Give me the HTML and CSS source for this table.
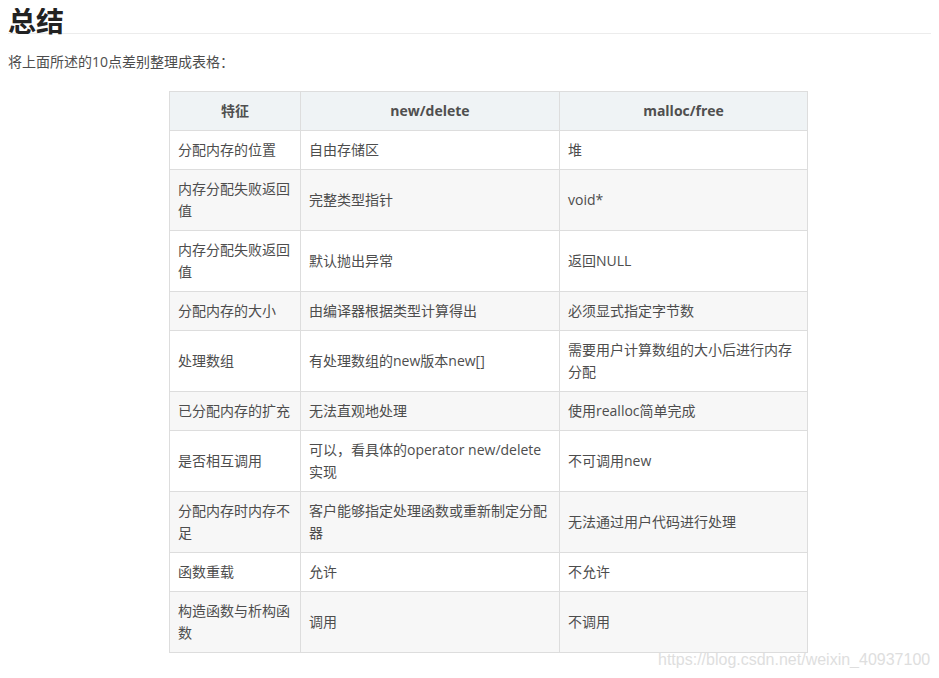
FILE: index.html
```html
<!DOCTYPE html>
<html lang="zh-CN">
<head>
<meta charset="utf-8">
<title>总结</title>
<link rel="stylesheet" href="styles.css">
</head>
<body>
<h2 class="title">总结</h2>
<p class="intro">将上面所述的10点差别整理成表格：</p>
<table class="cmp">
  <thead>
    <tr><th class="c1">特征</th><th class="c2">new/delete</th><th class="c3">malloc/free</th></tr>
  </thead>
  <tbody>
    <tr><td>分配内存的位置</td><td>自由存储区</td><td>堆</td></tr>
    <tr><td>内存分配失败返回值</td><td>完整类型指针</td><td>void*</td></tr>
    <tr><td>内存分配失败返回值</td><td>默认抛出异常</td><td>返回NULL</td></tr>
    <tr><td>分配内存的大小</td><td>由编译器根据类型计算得出</td><td>必须显式指定字节数</td></tr>
    <tr><td>处理数组</td><td>有处理数组的new版本new[]</td><td>需要用户计算数组的大小后进行内存分配</td></tr>
    <tr><td>已分配内存的扩充</td><td>无法直观地处理</td><td>使用realloc简单完成</td></tr>
    <tr><td>是否相互调用</td><td>可以，看具体的operator new/delete实现</td><td>不可调用new</td></tr>
    <tr><td>分配内存时内存不足</td><td>客户能够指定处理函数或重新制定分配器</td><td>无法通过用户代码进行处理</td></tr>
    <tr><td>函数重载</td><td>允许</td><td>不允许</td></tr>
    <tr><td>构造函数与析构函数</td><td>调用</td><td>不调用</td></tr>
  </tbody>
</table>
<div class="watermark">https://blog.csdn.net/weixin_40937100</div>
</body>
</html>
```
FILE: styles.css
```css
html, body {
  margin: 0;
  padding: 0;
  background: #fff;
}
body {
  margin: 8px;
  font-family: "Open Sans", "Noto Sans CJK SC", sans-serif;
  color: #4d4d4d;
  font-size: 14px;
  position: relative;
  min-height: 660px;
}
.title {
  margin: 0 -8px 0 0;
  font-size: 28px;
  line-height: 25px;
  font-weight: 700;
  color: #222;
  border-bottom: 1px solid #ececec;
  font-family: "Noto Sans CJK SC", sans-serif;
}
.intro {
  margin: 17px 0 0 0;
  line-height: 22px;
  font-size: 14px;
  color: #4d4d4d;
}
.cmp {
  margin: 18px 0 0 161px;
  border-collapse: collapse;
  font-size: 14px;
  line-height: 22px;
}
.cmp th, .cmp td {
  border: 1px solid #ddd;
  padding: 8px 8px;
  vertical-align: middle;
  text-align: left;
  color: #4d4d4d;
}
.cmp th {
  background: #eff3f5;
  text-align: center;
  font-weight: 700;
  color: #4f4f4f;
}
.cmp .c1 { width: 114px; }
.cmp .c2 { width: 242px; }
.cmp .c3 { width: 231px; }
.cmp tbody tr:nth-child(even) td {
  background: #f7f7f7;
}
.cmp tbody tr:nth-child(odd) td {
  background: #fff;
}
.watermark {
  position: absolute;
  left: 650px;
  top: 643px;
  font-family: "Liberation Sans", Arial, sans-serif;
  font-size: 16px;
  color: #dedede;
  white-space: nowrap;
}
```
